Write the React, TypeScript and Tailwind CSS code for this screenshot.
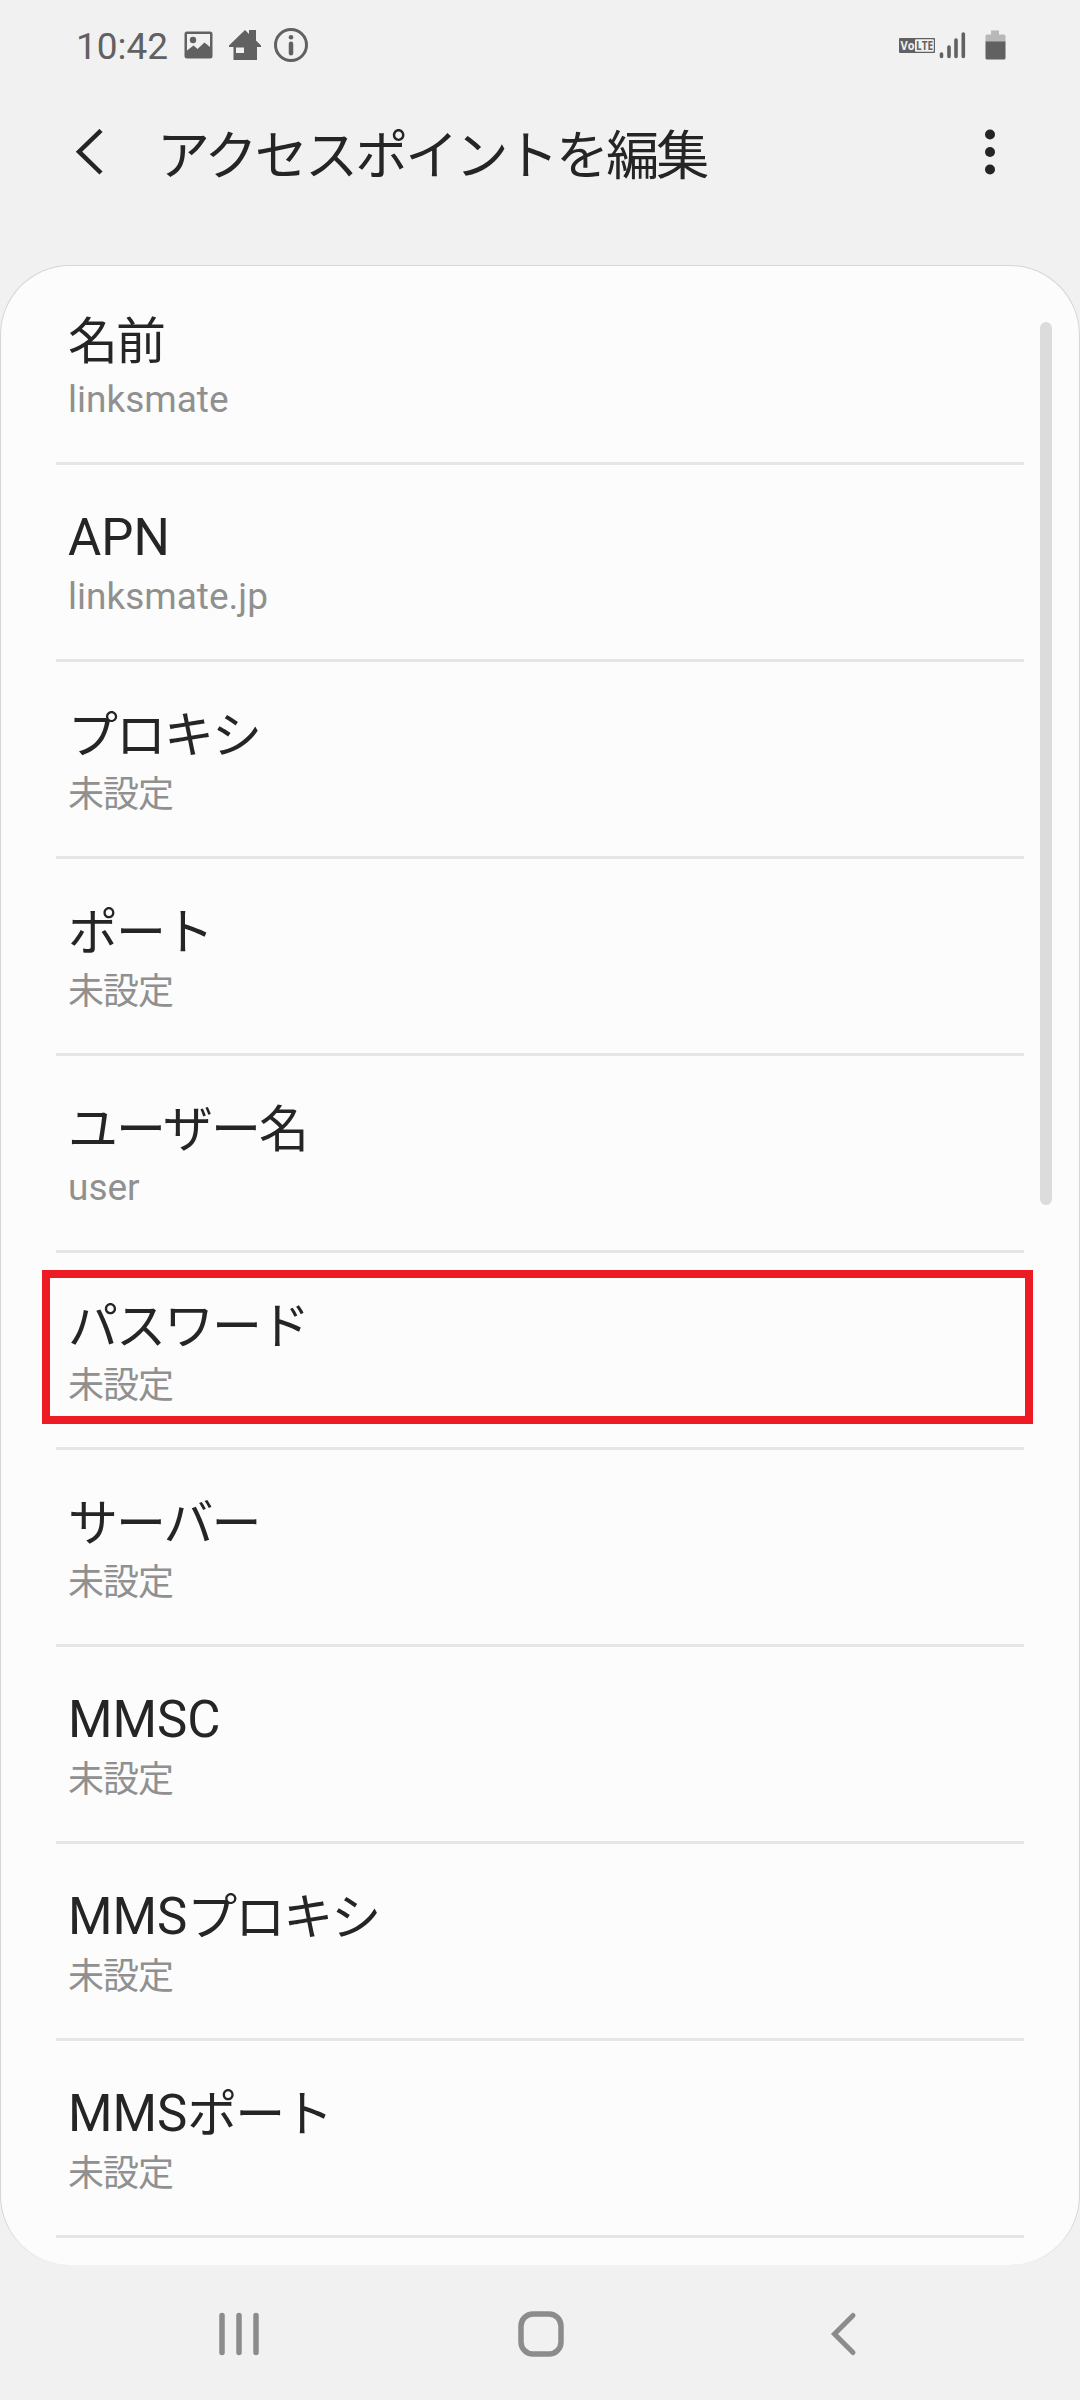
import React from 'react'

interface Setting {
  label: string
  value: string
  highlighted?: boolean
}

const UNSET = '未設定'

const settings: Setting[] = [
  { label: '名前', value: 'linksmate' },
  { label: 'APN', value: 'linksmate.jp' },
  { label: 'プロキシ', value: UNSET },
  { label: 'ポート', value: UNSET },
  { label: 'ユーザー名', value: 'user' },
  { label: 'パスワード', value: UNSET, highlighted: true },
  { label: 'サーバー', value: UNSET },
  { label: 'MMSC', value: UNSET },
  { label: 'MMSプロキシ', value: UNSET },
  { label: 'MMSポート', value: UNSET },
]

// Latin runs keep the Roboto size, Japanese runs are set a little differently
function MixedText({ text, jpClass }: { text: string; jpClass: string }) {
  const runs = text.split(/([\x20-\x7e]+)/).filter(Boolean)
  return (
    <>
      {runs.map((run, i) => (
        <span key={i} className={/^[\x20-\x7e]/.test(run) ? '' : jpClass}>
          {run}
        </span>
      ))}
    </>
  )
}

function VolteIcon() {
  return (
    <svg
      className="h-[21px] w-9 overflow-visible font-['Open_Sans'] text-[12px] font-bold"
      viewBox="0 -3 36 21"
    >
      <rect width="36" height="15" rx="1" fill="currentColor" />
      <rect x="16" y="1.200" width="18.800" height="12.600" rx="1" fill="#f1f1f1" />
      <text x="1.500" y="12" textLength="14" lengthAdjust="spacingAndGlyphs" fill="#f1f1f1">
        Vo
      </text>
      <text x="17" y="12" textLength="17" lengthAdjust="spacingAndGlyphs" fill="currentColor">
        LTE
      </text>
    </svg>
  )
}

function StatusBar() {
  return (
    <div className="flex h-[90px] items-center justify-between pr-[74px] pl-[76px] text-[#616161]">
      <div className="flex items-center">
        <span className="mt-[3px] w-[108px] text-[37px] leading-[44px]">10:42</span>
        <svg className="h-7 w-[30px]" viewBox="0 0 30 28">
          <path
            fillRule="evenodd"
            fill="currentColor"
            d="M3 0.5H26Q28.500 0.5 28.500 3V25Q28.500 27.500 26 27.500H3Q.5 27.500 .5 25V3Q.5 .5 3 .5ZM3 3V19.500L9.500 14.500L13.500 18L20.500 11.500L26 16V3Z"
          />
          <circle cx="9" cy="9" r="3.200" fill="currentColor" />
        </svg>
        <svg className="ml-[15px] h-8 w-8" viewBox="0 0 32 32">
          <path
            fillRule="evenodd"
            fill="currentColor"
            d="M16 1L20 5V1H27V11.500L32 16.500V18H28V31H4.500V18H0V16.500ZM7 18.500V24H15V18.500Z"
          />
        </svg>
        <svg className="ml-[13px] h-[34px] w-[34px]" viewBox="0 0 34 34">
          <circle cx="17" cy="17" r="15.500" fill="none" stroke="currentColor" strokeWidth="3" />
          <circle cx="17" cy="9.300" r="2.300" fill="currentColor" />
          <path d="M17 15.800V25.200" stroke="currentColor" strokeWidth="4.500" strokeLinecap="round" />
        </svg>
      </div>
      <div className="flex items-center">
        <VolteIcon />
        <svg className="ml-1 h-7 w-7" viewBox="0 0 28 28">
          <path
            d="M2.500 23V25.500M10 16V25.500M17 9V25.500M24.300 3V25.500"
            stroke="currentColor"
            strokeWidth="3.600"
            strokeLinecap="round"
          />
        </svg>
        <svg className="ml-[18px] h-[30px] w-[21px]" viewBox="0 0 21 30">
          <path fill="#b8b8b8" d="M6 0.500H14V4.500H19Q20.500 4.500 20.500 6V12H.5V6Q.5 4.500 2 4.500H6Z" />
          <path fill="currentColor" d="M.5 11.500H20.500V28Q20.500 29.500 19 29.500H2Q.5 29.500 .5 28Z" />
        </svg>
      </div>
    </div>
  )
}

function Header() {
  return (
    <header className="flex h-[175px] items-start pt-[37px] pr-[85px] pl-[75px] text-[#252525]">
      <svg className="mt-[2px] h-[46px] w-[30px]" viewBox="0 0 30 46">
        <path d="M26 1.500L4 22.700L26 44" fill="none" stroke="currentColor" strokeWidth="4.500" />
      </svg>
      <h1 className="ml-[52px] flex-1 text-[53px] leading-[60px] tracking-[-2.800px]">
        アクセスポイントを編集
      </h1>
      <svg className="mt-[2px] h-[46px] w-[10px]" viewBox="0 0 10 46">
        <circle cx="5" cy="5.500" r="5" fill="currentColor" />
        <circle cx="5" cy="23" r="5" fill="currentColor" />
        <circle cx="5" cy="40.500" r="5" fill="currentColor" />
      </svg>
    </header>
  )
}

function SettingRow({ label, value, highlighted }: Setting) {
  return (
    <li className="relative h-[197px] border-b-[3px] border-[#e6e6e6] pt-[43px] pl-3">
      <div className="text-[51px] leading-[60px] text-[#252525]">
        <MixedText text={label} jpClass="relative top-px text-[50px] tracking-[-2px]" />
      </div>
      <div className="mt-[7px] text-[37px] leading-[44px] text-[#909090]">
        <MixedText text={value} jpClass="relative top-px text-[36px] tracking-[-1px]" />
      </div>
      {highlighted && (
        <div className="absolute top-[17px] -right-[9px] -left-[14px] h-[154px] border-8 border-[#ed1c24]" />
      )}
    </li>
  )
}

function NavBar() {
  return (
    <nav className="flex h-[135px] items-start pt-[46px] pl-[218px] text-[#8c8c8c]">
      <svg className="h-[46px] w-[42px]" viewBox="0 0 42 46">
        <path
          d="M4 4.500V41.500M21 4.500V41.500M38 4.500V41.500"
          stroke="currentColor"
          strokeWidth="5.500"
          strokeLinecap="round"
        />
      </svg>
      <svg className="ml-[258px] h-[46px] w-[46px]" viewBox="0 0 46 46">
        <rect x="3" y="3" width="40" height="40" rx="12" fill="none" stroke="currentColor" strokeWidth="5.500" />
      </svg>
      <svg className="ml-[266px] h-[46px] w-[28px]" viewBox="0 0 28 46">
        <path
          d="M23 4.500L4.500 23L23 41.500"
          fill="none"
          stroke="currentColor"
          strokeWidth="5"
          strokeLinecap="round"
        />
      </svg>
    </nav>
  )
}

export default function App() {
  return (
    <div className="flex h-[2400px] w-[1080px] flex-col overflow-hidden bg-[#f1f1f1] font-[Roboto,'Noto_Sans_CJK_JP',sans-serif]">
      <StatusBar />
      <Header />
      <main className="relative h-[2000px] rounded-[70px] border border-b-0 border-[#d6d6d6] bg-[#fcfcfc] pt-[2px]">
        <ul className="mr-[55px] ml-[55px]">
          {settings.map((setting) => (
            <SettingRow key={setting.label} {...setting} />
          ))}
        </ul>
        <div className="absolute top-[56px] right-[27px] h-[883px] w-3 rounded-full bg-[#dcdcdc]" />
      </main>
      <NavBar />
    </div>
  )
}
